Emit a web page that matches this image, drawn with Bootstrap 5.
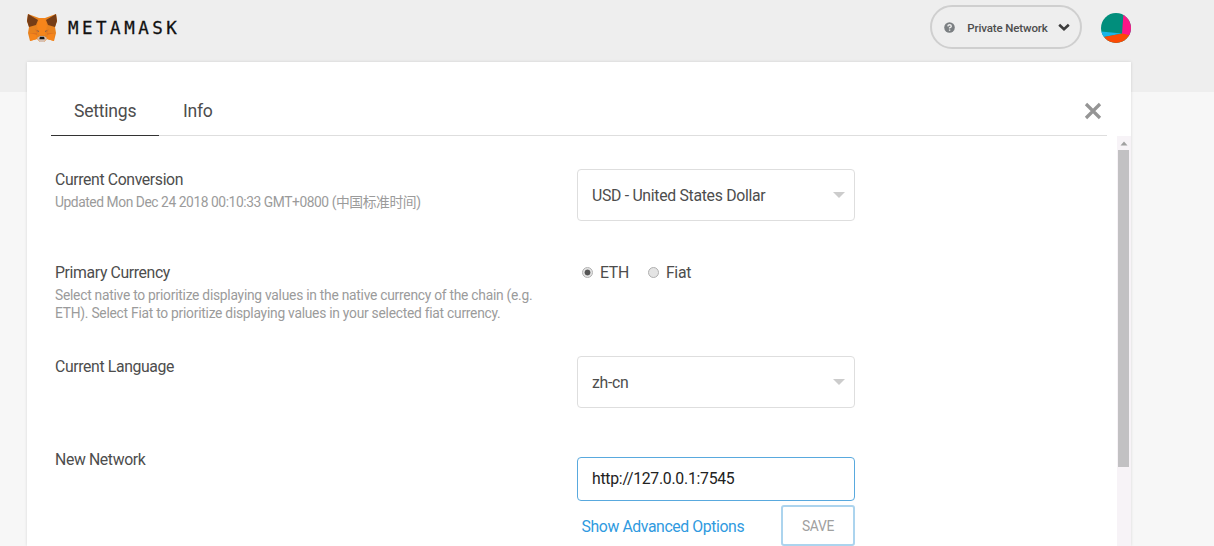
<!DOCTYPE html>
<html lang="en">
<head>
<meta charset="utf-8">
<title>MetaMask Settings</title>
<link href="https://cdn.jsdelivr.net/npm/bootstrap@5.3.0/dist/css/bootstrap.min.css" rel="stylesheet">
<style>
body{font-family:Roboto,"Noto Sans CJK SC",sans-serif;background:linear-gradient(#eee 92px,#f7f7f7 92px);color:#4d4d4d;height:546px;overflow:hidden;line-height:20px}
.shell{width:1104px;margin-left:27px;height:546px}
.topbar{height:62px;flex:none;padding-bottom:7px}
.wordmark{font:17.5px/20px "DejaVu Sans Mono",monospace;letter-spacing:3.5px;color:#111;margin-left:11px;-webkit-text-stroke:.3px #111;padding-top:1px}
.network{width:152px;height:44px;border:2px solid #cfcfcf;border-radius:22px;font-size:11.5px;letter-spacing:-.13px;font-weight:500;color:#4d4d4d;padding:0 10px 0 12px;margin-top:-1px}
.netname{padding:1.5px 0 0 2px}
.panel{background:#fff;box-shadow:0 0 3px rgba(0,0,0,.13);min-height:0}
.panel-head{height:74px;margin:0 24px;border-bottom:1px solid #dedede}
.tabitem{font-size:17.6px;letter-spacing:-.25px;padding:37px 23px 0;height:74px;line-height:24px}
.tabitem.active{border-bottom:1px solid #333;width:108px}
.tabitem + .tabitem{padding-left:24px}
.scroller{min-height:0}
.bar{width:14px;background:#f7f3f7}
.thumb{width:11px;height:317px;background:#c2c1c3;margin-right:1px}
.settings{padding:33px 0 0 28px}
.setting{height:93.6px;flex:none}
.label-col{width:522px;font-size:15.8px;letter-spacing:-.37px;padding-top:.7px;flex:none}
.desc{font-size:13.8px;line-height:18px;letter-spacing:-.25px;color:#9b9b9b;margin-top:3px;white-space:nowrap}
.desc.stamp{letter-spacing:-.43px}
.field-col{width:278px;font-size:15.8px;letter-spacing:-.3px}
.picker{height:52px;border:1px solid #dedede;border-radius:4px;padding:2px 9px 0 14px;margin-top:-.4px}
.rpc{height:44px;border:1px solid #59a9de;border-radius:4px;padding:0 14px;color:#222;letter-spacing:-.27px;margin-top:7px}
.dot{width:11px;height:11px;border:1px solid #b0b0b0;border-radius:50%;background:#e4e4e4}
.dot.on{background:radial-gradient(circle,#555 0 2.6px,#e4e4e4 3.3px)}
.adv{color:#2f9ae0;letter-spacing:-.4px;margin-left:4.5px;padding-top:3.5px}
.save{width:74px;height:41px;border:2px solid #acd4ee;border-radius:3px;color:#a0a0a0;font-size:13.8px;letter-spacing:-.25px;background:#fff;padding:1px 0 0}
</style>
</head>
<body>
<div class="shell d-flex flex-column">
<header class="topbar d-flex align-items-center justify-content-between">
<div class="d-flex align-items-center">
<svg width="30" height="28" viewBox="0 0 30 28">
<path fill="#e8821e" d="M1 0 12 4H18L29 0 30 7 28 13 29 19 27 27 20 25 17 28H13L10 25 3 27 1 19 2 13 0 7Z"/>
<path fill="#763d16" d="M1 0 11 6 9 11 2 13 0 7ZM29 0 19 6 21 11 28 13 30 7Z"/>
<path fill="#f6851b" d="M12 4H18L20 12 18 21H12L10 12ZM3 20 9 19 10 25 3 27ZM27 20 21 19 20 25 27 27Z"/>
<path fill="#df7320" d="M8 15 12 17 10 19ZM22 15 18 17 20 19ZM3 19 10 19 10 21ZM27 19 20 19 20 21Z"/>
<path fill="#82664c" d="m9.5 16 2.6 1-.4 1.3zm11 0-2.6 1 .4 1.3z"/>
<path fill="#d7c1b3" d="M10 24 13 22H17L20 24 17 28H13Z"/>
<path fill="#161616" d="M12.9 22.8H17.1L17.6 25.2H12.4Z"/>
</svg>
<span class="wordmark">METAMASK</span>
</div>
<div class="d-flex align-items-center">
<div class="network d-flex align-items-center justify-content-between">
<svg width="11" height="11" viewBox="0 0 11 11"><circle cx="5.5" cy="5.5" r="5.3" fill="#7b7f82"/><path d="M3.8 4.3Q4 2.8 5.6 2.8T7.3 4.2Q7.3 5 5.6 5.8V6.5" fill="none" stroke="#eee" stroke-width="1.4"/><path d="M4.9 7.5h1.4v1.3H4.9z" fill="#eee"/></svg>
<span class="netname">Private Network</span>
<svg width="12" height="9" viewBox="0 0 12 9"><path d="m1.2 1.8 4.8 4.5 4.8-4.5" fill="none" stroke="#3c3c3c" stroke-width="2.6"/></svg>
</div>
<svg class="rounded-circle" style="margin-left:19px" width="30" height="30" viewBox="0 0 30 30"><path fill="#018e7c" d="M0 0h30v30H0z"/><path fill="#ff1587" d="M22.5 0H30v24l-9-3z"/><path fill="#19b5e8" d="m0 18.5 21 2L3 24l-3 1z"/><path fill="#fb4a04" d="m0 24.5 21-4 9 2v8H0z"/></svg>
</div>
</header>
<main class="panel d-flex flex-column flex-grow-1">
<div class="panel-head d-flex flex-none">
<div class="tabitem active">Settings</div>
<div class="tabitem">Info</div>
<svg class="ms-auto" style="margin:40px 5px 0 0" width="18" height="18" viewBox="0 0 18 18"><path d="m2 2 14 14M16 2 2 16" stroke="#959595" stroke-width="3.2"/></svg>
</div>
<div class="scroller d-flex flex-grow-1">
<div class="settings d-flex flex-column flex-grow-1">
<div class="setting d-flex">
<div class="label-col">Current Conversion<div class="desc stamp">Updated Mon Dec 24 2018 00:10:33 GMT+0800 (中国标准时间)</div></div>
<div class="field-col"><div class="picker d-flex align-items-center justify-content-between"><span>USD - United States Dollar</span><svg width="12" height="10" viewBox="0 0 12 10"><path fill="#ccc" d="M0 1h12L6 7z"/></svg></div></div>
</div>
<div class="setting d-flex">
<div class="label-col">Primary Currency<div class="desc">Select native to prioritize displaying values in the native currency of the chain (e.g.<br>ETH). Select Fiat to prioritize displaying values in your selected fiat currency.</div></div>
<div class="field-col d-flex align-items-center align-self-start" style="padding-left:5px"><span class="dot on"></span><span style="margin:0 19px 0 7px">ETH</span><span class="dot"></span><span style="margin-left:7px">Fiat</span></div>
</div>
<div class="setting d-flex">
<div class="label-col">Current Language</div>
<div class="field-col"><div class="picker d-flex align-items-center justify-content-between"><span>zh-cn</span><svg width="12" height="10" viewBox="0 0 12 10"><path fill="#ccc" d="M0 1h12L6 7z"/></svg></div></div>
</div>
<div class="setting d-flex">
<div class="label-col">New Network</div>
<div class="field-col"><div class="rpc d-flex align-items-center">http://127.0.0.1:7545</div><div class="d-flex align-items-center justify-content-between" style="margin-top:4px"><span class="adv">Show Advanced Options</span><button class="save">SAVE</button></div></div>
</div>
</div>
<div class="bar d-flex flex-column align-items-center"><svg width="14" height="14" viewBox="0 0 14 14" class="flex-shrink-0"><path fill="#a0a0a0" d="m3.5 9.5 3.5-4 3.5 4z"/></svg><div class="thumb flex-shrink-0"></div></div>
</div>
</main>
</div>
<script src="https://cdn.jsdelivr.net/npm/bootstrap@5.3.0/dist/js/bootstrap.bundle.min.js"></script>
</body>
</html>
